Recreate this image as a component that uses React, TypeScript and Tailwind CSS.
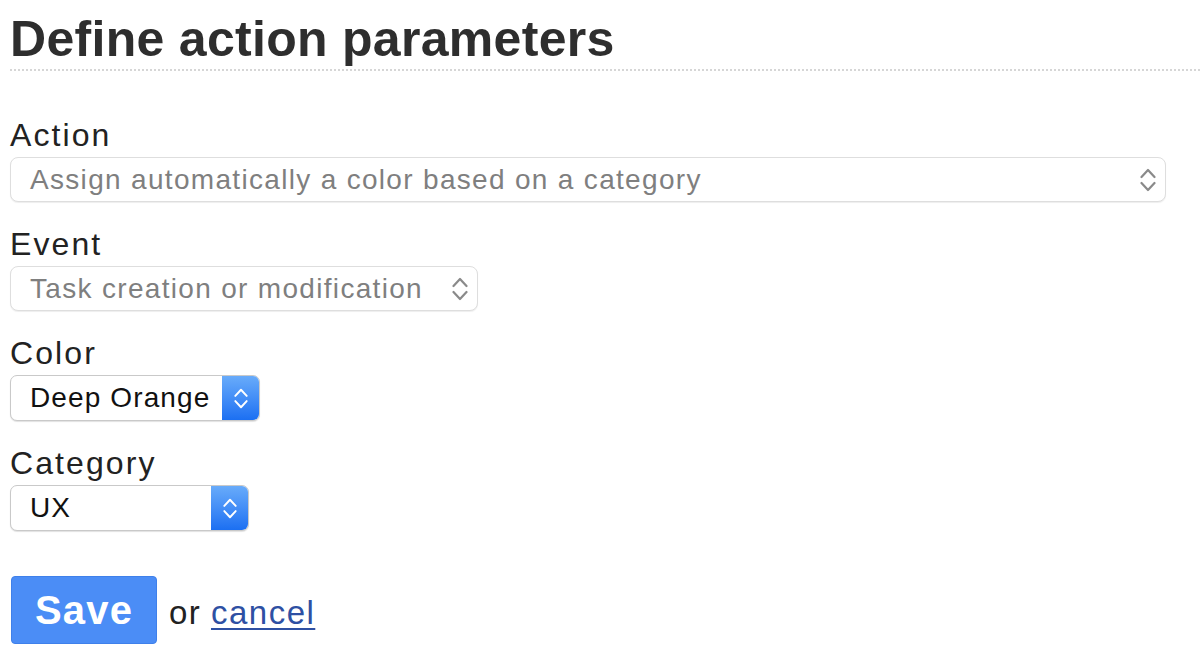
import React from "react";

function Chevrons({ className, w = 16, h = 26 }: { className?: string; w?: number; h?: number }) {
  return (
    <svg width={w} height={h} viewBox="0 0 16 26" fill="none" className={className}>
      <path d="M1.5 10 L8 3 L14.5 10" stroke="currentColor" strokeWidth="2.2" strokeLinecap="round" strokeLinejoin="round" />
      <path d="M1.5 16 L8 23 L14.5 16" stroke="currentColor" strokeWidth="2.2" strokeLinecap="round" strokeLinejoin="round" />
    </svg>
  );
}

function Label({ children }: { children: React.ReactNode }) {
  return <div className="text-[32px] leading-[36px] tracking-[0.065em] text-[#222] mb-[4px]">{children}</div>;
}

// greyed select (Action / Event)
function PlainSelect({ value, width }: { value: string; width: string }) {
  return (
    <div className={`flex items-center h-[45px] ${width} rounded-[8px] border border-[#dedede] bg-white shadow-[0_1px_1px_rgba(0,0,0,0.07)] pl-[19px] pr-[9px]`}>
      <span className="text-[28px] leading-none tracking-[0.047em] text-[#7f7f7f] whitespace-nowrap">{value}</span>
      <Chevrons className="ml-auto text-[#8a8a8a]" />
    </div>
  );
}

// active select with blue stepper (Color / Category)
function BlueSelect({ value, width }: { value: string; width: string }) {
  return (
    <div className={`flex h-[46px] ${width} rounded-[7px] border border-[#c9c9c9] bg-white shadow-[0_1px_1px_rgba(0,0,0,0.12)] overflow-hidden`}>
      <div className="flex-1 flex items-center pl-[19px]">
        <span className="text-[28px] leading-none tracking-[0.04em] text-[#111] whitespace-nowrap">{value}</span>
      </div>
      <div className="w-[37px] flex items-center justify-center bg-gradient-to-b from-[#68abfa] to-[#1b6ff2]">
        <Chevrons className="text-white" w={14} h={23} />
      </div>
    </div>
  );
}

export default function App() {
  return (
    <div className="min-h-screen bg-white pl-[10px]" style={{ fontFamily: '"Liberation Sans", Arial, sans-serif' }}>
      <h1 className="pt-[14px] pb-[5px] text-[50px] leading-[50px] font-bold tracking-[0.3px] text-[#2e2e2e] border-b-2 border-dotted border-[#d6d6d6]">
        Define action parameters
      </h1>

      <div className="mt-[46px] flex flex-col gap-[24px]">
        <div>
          <Label>Action</Label>
          <PlainSelect value="Assign automatically a color based on a category" width="w-[1156px]" />
        </div>
        <div>
          <Label>Event</Label>
          <PlainSelect value="Task creation or modification" width="w-[468px]" />
        </div>
        <div>
          <Label>Color</Label>
          <BlueSelect value="Deep Orange" width="w-[250px]" />
        </div>
        <div>
          <Label>Category</Label>
          <BlueSelect value="UX" width="w-[239px]" />
        </div>
      </div>

      <div className="mt-[45px] flex items-baseline">
        <button className="flex items-center justify-center h-[68px] w-[146px] ml-[1px] rounded-[4px] border border-[#3f80ea] bg-[#4b8df6] text-white font-bold text-[40px] leading-[40px] tracking-[0.03em]">
          Save
        </button>
        <span className="ml-[12px] text-[33px] tracking-[0.04em] text-[#222]">or</span>
        <a href="#" className="ml-[10px] text-[33px] tracking-[0.045em] text-[#2e50a3] underline underline-offset-[4px] decoration-[2px]">
          cancel
        </a>
      </div>
    </div>
  );
}
